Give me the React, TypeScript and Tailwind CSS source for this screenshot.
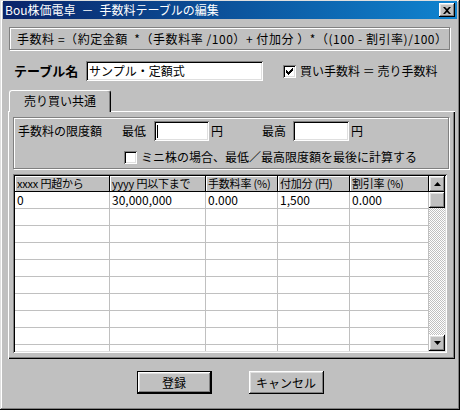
import React from "react";

const font = "font-['MS_UI_Gothic','Noto_Sans_CJK_JP',sans-serif]";

const raised =
  "shadow-[inset_-1px_-1px_#000,inset_1px_1px_#fff,inset_-2px_-2px_#808080,inset_2px_2px_#dfdfdf]";
const sunken =
  "shadow-[inset_1px_1px_#808080,inset_-1px_-1px_#fff,inset_2px_2px_#000,inset_-2px_-2px_#dfdfdf]";

function CheckBox({ checked }: { checked?: boolean }) {
  return (
    <div className={`w-[13px] h-[13px] bg-white shrink-0 flex items-center justify-center ${sunken}`}>
      {checked && (
        <svg width="7" height="7" viewBox="0 0 7 7">
          <path d="M0 2h1v1h1v1h1V3h1V2h1V1h1V0h1v3H6v1H5v1H4v1H3v1H2V6H1V5H0z" fill="#000" />
        </svg>
      )}
    </div>
  );
}

function TextBox({ value, w, caret }: { value?: string; w: string; caret?: boolean }) {
  return (
    <div className={`${w} h-[20px] bg-white flex items-center pl-[3px] text-[12px] ${sunken}`}>
      {caret && <span className="w-px h-[13px] bg-black" />}
      {value}
    </div>
  );
}

function Arrow({ down }: { down?: boolean }) {
  return (
    <svg width="7" height="4" viewBox="0 0 7 4">
      <path d={down ? "M0 0h7L3.5 4z" : "M0 4h7L3.5 0z"} fill="#000" />
    </svg>
  );
}

const cols = [
  { w: "w-[95px]", head: "xxxx 円超から", val: "0" },
  { w: "w-[96px]", head: "yyyy 円以下まで", val: "30,000,000" },
  { w: "w-[72px]", head: "手数料率 (%)", val: "0.000" },
  { w: "w-[72px]", head: "付加分 (円)", val: "1,500" },
  { w: "w-[79px]", head: "割引率 (%)", val: "0.000" },
];

export default function App() {
  const rows = Array.from({ length: 10 }, (_, i) => i);
  return (
    <div
      className={`w-[460px] h-[410px] bg-[#c0c0c0] pt-px px-[3px] flex flex-col text-black ${font} shadow-[inset_-1px_-1px_#000,inset_1px_1px_#dfdfdf,inset_-2px_-2px_#808080,inset_2px_2px_#fff]`}
    >
      {/* Title bar */}
      <div className="h-[18px] flex items-center justify-between bg-gradient-to-r from-[#0a246a] to-[#1084d0]">
        <span className="pl-[2px] text-white text-[12px] leading-none">
          Bou株価電卓<span className="mx-[6px]">－</span>手数料テーブルの編集
        </span>
        <div className={`w-[16px] h-[14px] mr-[2px] bg-[#c0c0c0] flex items-center justify-center ${raised}`}>
          <svg width="8" height="7" viewBox="0 0 8 7">
            <path d="M0 0h2l2 2 2-2h2L5 3.5 8 7H6L4 5 2 7H0l3-3.5z" fill="#000" />
          </svg>
        </div>
      </div>

      {/* Formula */}
      <div className="mt-[8px] ml-[6px] w-[441px] h-[23px] flex items-center pl-[7px] text-[12px] tracking-[0.55px] border border-[#808080] shadow-[inset_1px_1px_#fff,1px_1px_#fff] whitespace-pre">
        手数料 =（約定金額  *（手数料率 /100）+ 付加分 ）*（(100 - 割引率)/100）
      </div>

      {/* Table name */}
      <div className="mt-[11px] h-[20px] flex items-center">
        <span className="ml-[11px] w-[72px] text-[13px] font-bold">テーブル名</span>
        <TextBox w="w-[177px]" value="サンプル・定額式" />
        <div className="ml-[20px] flex items-center gap-[4px] text-[12px]">
          <CheckBox checked />
          <span>買い手数料 ＝ 売り手数料</span>
        </div>
      </div>

      {/* Tab */}
      <div className="mt-[9px] ml-[6px] relative z-10 w-[102px] h-[22px] -mb-px bg-[#c0c0c0] rounded-t-[3px] border-t border-l border-white border-r border-r-black shadow-[inset_-1px_0_#808080] flex items-center justify-center text-[12px] pb-[2px]">
        売り買い共通
      </div>

      {/* Panel */}
      <div className="ml-[5px] w-[447px] h-[248px] pt-[6px] pl-[5px] flex flex-col shadow-[inset_1px_1px_#fff,inset_-1px_-1px_#000,inset_-2px_-2px_#808080]">
        {/* Group */}
        <div className="w-[436px] h-[52px] border border-[#808080] shadow-[inset_1px_1px_#fff,1px_1px_#fff] flex flex-col text-[12px]">
          <div className="mt-[3px] h-[20px] flex items-center">
            <span className="ml-[4px] w-[104px]">手数料の限度額</span>
            <span className="w-[32px]">最低</span>
            <TextBox w="w-[55px]" caret />
            <span className="ml-[2px] w-[51px]">円</span>
            <span className="w-[31px]">最高</span>
            <TextBox w="w-[56px]" />
            <span className="ml-[2px]">円</span>
          </div>
          <div className="mt-[7px] flex items-center gap-[4px] ml-[110px]">
            <CheckBox />
            <span>ミニ株の場合、最低／最高限度額を最後に計算する</span>
          </div>
        </div>

        {/* Grid */}
        <div className="mt-[5px] w-[434px] h-[179px] p-[2px] flex shadow-[inset_1px_1px_#808080,inset_-1px_-1px_#fff,inset_2px_2px_#000,inset_-2px_-2px_#dfdfdf]">
          <div className="w-[414px] h-full bg-white overflow-hidden flex flex-col text-[12px]">
            <div className="flex h-[16px] shrink-0">
              {cols.map((c) => (
                <div
                  key={c.head}
                  className={`${c.w} h-full bg-[#c0c0c0] border-r border-b border-black shadow-[inset_1px_1px_#fff] pl-[2px] flex items-center whitespace-nowrap overflow-hidden leading-none text-[11px] tracking-[-0.2px]`}
                >
                  {c.head}
                </div>
              ))}
            </div>
            {rows.map((r) => (
              <div key={r} className="flex h-[17px] shrink-0">
                {cols.map((c) => (
                  <div
                    key={c.head}
                    className={`${c.w} h-full border-r border-b border-[#c0c0c0] pl-[2px] flex items-center leading-none`}
                  >
                    {r === 0 ? c.val : ""}
                  </div>
                ))}
              </div>
            ))}
          </div>
          <div className="w-[16px] h-full flex flex-col">
            <div className={`h-[16px] bg-[#c0c0c0] flex items-center justify-center ${raised}`}>
              <Arrow />
            </div>
            <div className={`h-[16px] bg-[#c0c0c0] ${raised}`} />
            <div className="flex-1 [background-image:repeating-conic-gradient(#c0c0c0_0%_25%,#ffffff_0%_50%)] [background-size:2px_2px]" />
            <div className={`h-[16px] bg-[#c0c0c0] flex items-center justify-center ${raised}`}>
              <Arrow down />
            </div>
          </div>
        </div>
      </div>

      {/* Buttons */}
      <div className="mt-[12px] flex justify-center gap-[37px] text-[12px]">
        <div className="w-[75px] h-[23px] border border-black">
          <div className={`w-full h-full bg-[#c0c0c0] flex items-center justify-center ${raised}`}>登録</div>
        </div>
        <div className={`w-[75px] h-[23px] bg-[#c0c0c0] flex items-center justify-center ${raised}`}>
          キャンセル
        </div>
      </div>
    </div>
  );
}
